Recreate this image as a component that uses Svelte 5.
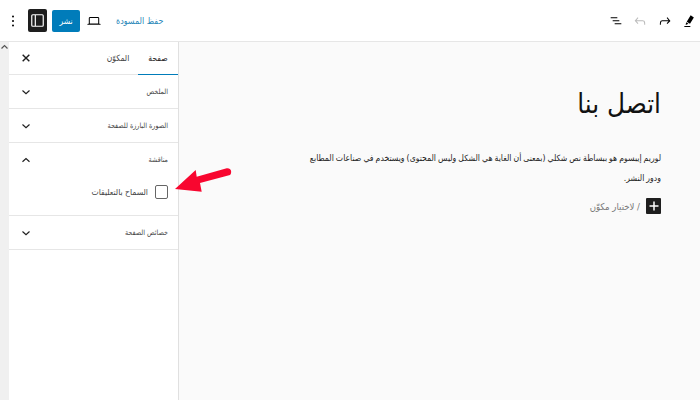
<script>
  const panels = [
    { title: 'الملخص', open: false },
    { title: 'الصورة البارزة للصفحة', open: false },
    { title: 'مناقشة', open: true },
    { title: 'خصائص الصفحة', open: false }
  ];
</script>

<div class="editor">
  <header class="topbar">
    <div class="group left">
      <button class="more" aria-label="خيارات">
        <svg width="16" height="16" viewBox="0 0 16 16"><circle cx="8" cy="3.500" r="1"/><circle cx="8" cy="8" r="1"/><circle cx="8" cy="12.500" r="1"/></svg>
      </button>
      <button class="settings" aria-label="الإعدادات">
        <svg width="19" height="19" viewBox="0 0 24 24"><path fill="#fff" fill-rule="evenodd" d="M18 4H6a2 2 0 0 0-2 2v12a2 2 0 0 0 2 2h12a2 2 0 0 0 2-2V6a2 2 0 0 0-2-2zM8.500 18.500H6a.5.5 0 0 1-.5-.5V6a.5.5 0 0 1 .5-.5h2.500v13zm10-.5a.5.5 0 0 1-.5.5h-8v-13h8a.5.5 0 0 1 .5.5v12z"/></svg>
      </button>
      <button class="publish">نشر</button>
      <button class="device" aria-label="معاينة">
        <svg width="16" height="16" viewBox="0 0 24 24"><path d="M20.500 16h-.7V8c0-1.100-.9-2-2-2H6.200c-1.100 0-2 .9-2 2v8h-.7c-.8 0-1.500.7-1.500 1.500h20c0-.8-.7-1.500-1.500-1.500zM5.700 8c0-.3.2-.5.5-.5h11.600c.3 0 .5.200.5.500v7.600H5.700V8z"/></svg>
      </button>
      <span class="save">حفظ المسودة</span>
    </div>
    <div class="group right">
      <svg class="tool" viewBox="0 0 24 24"><path d="M4 6.250h10v1.500H4zM7 10.750h10v1.500H7zM10 15.250h10v1.500H10z"/></svg>
      <svg class="tool off" viewBox="0 0 24 24"><path d="M18.300 11.700c-.6-.6-1.400-.9-2.300-.9H6.700l2.900-3.300-1.100-1-4.500 5L8.500 16.500l1.100-1-2.900-3.200H16c.5 0 .9.200 1.300.5 1 1 1 3.400 1 4.500v.4h1.500v-.6c.1-1.200.1-4.100-1.500-5.700z"/></svg>
      <svg class="tool" viewBox="0 0 24 24"><path d="M15.600 6.500l-1.100 1 2.900 3.300H8c-.9 0-1.700.3-2.300.9-1.400 1.500-1.400 4.200-1.400 5.600v.2h1.500v-.3c0-1.100 0-3.500 1-4.500.3-.3.700-.5 1.300-.5h9.200L14.500 15.500l1.100 1.100 4.600-4.600-4.600-5.500z"/></svg>
      <svg class="tool" viewBox="0 0 24 24"><path d="M14.500 3.500l4.800 3.200-5.800 9.300-4.900-3zM7.700 14l3.600 2.200-4.300 1.800zM5 19.500h9V21H5z"/></svg>
    </div>
  </header>

  <div class="body">
    <div class="gutter">
      <svg width="9" height="9" viewBox="0 0 9 9"><path d="M1.500 5.500L4.500 2.500L7.500 5.500" fill="none" stroke="#555" stroke-width="1.200"/></svg>
    </div>

    <aside class="sidebar">
      <div class="tabs">
        <button class="close" aria-label="إغلاق">
          <svg width="10" height="10" viewBox="0 0 12 12"><path d="M2 2l8 8M10 2l-8 8" stroke="#1e1e1e" stroke-width="1.700"/></svg>
        </button>
        <div class="tab-list">
          <span class="tab">المكوّن</span>
          <span class="tab active">صفحة</span>
        </div>
      </div>

      {#each panels as panel}
        <section class="panel">
          <div class="panel-head">
            <svg class="chev" viewBox="0 0 24 24">
              <path d={panel.open ? 'M6 15L12 9.500L18 15' : 'M6 9.500L12 15L18 9.500'} />
            </svg>
            <span class="panel-title">{panel.title}</span>
          </div>
          {#if panel.open}
            <label class="check-row">
              <span class="check-label">السماح بالتعليقات</span>
              <span class="box"></span>
            </label>
          {/if}
        </section>
      {/each}
    </aside>

    <main class="canvas">
      <div class="page" dir="rtl">
        <h1>اتصل بنا</h1>
        <p>لوريم إيبسوم هو ببساطة نص شكلي (بمعنى أن الغاية هي الشكل وليس المحتوى) ويستخدم في صناعات المطابع ودور النشر.</p>
        <div class="appender">
          <span class="plus">
            <svg width="14" height="14" viewBox="0 0 14 14"><path d="M7 2.500v9M2.500 7h9" stroke="#fff" stroke-width="1.500"/></svg>
          </span>
          <span class="hint">/ لاختيار مكوّن</span>
        </div>
      </div>
    </main>
  </div>

  <svg class="arrow" width="60" height="30" viewBox="0 0 60 30">
    <path d="M0 22L20.700 3L21.700 9.700L51.700 1.300Q56 1 56.200 5Q56 7.500 55 8L25 16L26.700 24.700z" fill="#f8062f" />
  </svg>
</div>

<style>
  :global(body) { margin: 0; background: #fff; }
  .editor {
    position: relative;
    width: 700px; height: 400px; overflow: hidden;
    font-family: "DejaVu Sans Condensed", "DejaVu Sans", "Liberation Sans", sans-serif;
    color: #1e1e1e;
  }
  button {
    border: 0; background: none; padding: 0; margin: 0;
    display: flex; align-items: center; justify-content: center;
    font: inherit; color: inherit;
  }

  .topbar {
    display: flex; align-items: center; justify-content: space-between;
    height: 42px; box-sizing: border-box;
    background: #fff;
    border-bottom: 1px solid #e6e6e6;
  }
  .group { display: flex; align-items: center; }
  .more { width: 16px; margin-left: 5px; }
  .settings {
    width: 19px; height: 23px; margin-left: 7px;
    background: #1e1e1e; border-radius: 2px;
  }
  .publish {
    width: 28px; height: 22px; margin-left: 5px;
    background: #007cba; color: #fff; font-size: 8.500px; border-radius: 2px;
  }
  .device { width: 24px; margin-left: 2px; }
  .save { margin-left: 10px; font-size: 8.900px; color: #2987b9; }
  .right { padding-right: 3px; gap: 8.500px; }
  .tool { width: 16px; height: 16px; }
  .tool.off { fill: #bbb; }

  .body { display: flex; height: 358px; }
  .gutter {
    width: 9px; flex: none; background: #f0f0f0;
    display: flex; justify-content: center; align-items: flex-start;
  }
  .gutter svg { margin-top: 1px; }

  .sidebar {
    width: 169px; flex: none;
    background: #fff;
    border-right: 1px solid #e0e0e0;
  }
  .tabs {
    display: flex; align-items: stretch; justify-content: space-between;
    height: 32px;
    border-bottom: 1px solid #e6e6e6;
  }
  .close { width: 34px; }
  .tab-list { display: flex; }
  .tab {
    display: flex; align-items: center; justify-content: center;
    width: 40px; font-size: 8.500px; color: #444;
    box-sizing: border-box;
  }
  .tab.active { color: #1e1e1e; border-bottom: 1.500px solid #007cba; margin-bottom: -1px; }

  .panel { border-bottom: 1px solid #e6e6e6; }
  .panel-head {
    display: flex; align-items: center; justify-content: space-between;
    height: 33px; padding: 0 10px 0 10px;
  }
  .chev { fill: none; stroke: #1e1e1e; stroke-width: 2; width: 14px; height: 14px; }
  .panel-title { font-size: 7.100px; color: #444; }
  .check-row {
    display: flex; align-items: center; justify-content: flex-end; gap: 7px;
    height: 39px; padding: 0 10px 7px 0; box-sizing: border-box;
  }
  .check-label { font-size: 8.500px; color: #444; }
  .box {
    width: 11px; height: 12px;
    border: 1px solid #666; border-radius: 2px;
  }

  .canvas { flex: 1; background: #fafafa; padding: 45px 39px 0 126px; }
  .page { width: 356px; }
  h1 { margin: 0; font-size: 27.500px; font-weight: 400; line-height: 32px; color: #111; }
  p { margin: 29px 0 0; font-size: 8.600px; word-spacing: -.4px; line-height: 20px; color: #222; }
  .appender { display: flex; align-items: center; gap: 6px; margin-top: 10px; }
  .plus {
    width: 15px; height: 16px; background: #1e1e1e; border-radius: 1px;
    display: flex; align-items: center; justify-content: center;
  }
  .hint { font-size: 9.500px; color: #777; }

  .arrow { position: absolute; left: 175px; top: 167px; }
</style>
